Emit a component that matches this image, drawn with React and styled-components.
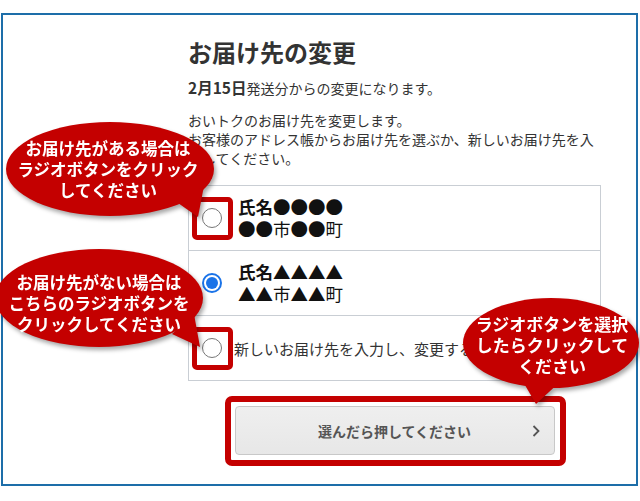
import React from "react";
import styled, { createGlobalStyle } from "styled-components";

const GlobalStyle = createGlobalStyle`
    body {
        margin: 0;
        background: #fff;
        font-family: "Noto Sans CJK JP", "Noto Sans", sans-serif;
        color: #333;
    }
`

const Page = styled.div`
    position: relative;
    width: 640px;
    height: 501px;
    overflow: hidden;
    padding-top: 13px;
    padding-left: 1px;
    box-sizing: border-box;
`

const Frame = styled.div`
    width: 637px;
    height: 473px;
    box-sizing: border-box;
    border: 2px solid #1d6ea9;
    padding: 21px 0 0 185px;
`

const Column = styled.div`
    width: 413px;
    display: flex;
    flex-direction: column;
`

const Title = styled.h1`
    margin: 0;
    font-size: 24px;
    line-height: 31px;
    font-weight: 700;
    color: #333;
`

const Lead = styled.p`
    margin: 10px 0 0;
    font-size: 14px;
    line-height: 20px;
    b {
        font-size: 15.5px;
        font-weight: 700;
    }
`

const Note = styled.p`
    margin: 13px 0 0;
    font-size: 14px;
    line-height: 19px;
`

const List = styled.div`
    margin-top: 17px;
    border: 1px solid #c9ced4;
`

const Row = styled.label`
    display: flex;
    align-items: center;
    height: 64px;
    padding-left: 13px;
    gap: ${p => p.$gap}px;
    & + & {
        border-top: 1px solid #c9ced4;
    }
`

const Radio = styled.span`
    position: relative;
    flex: none;
    width: 20px;
    height: 20px;
    box-sizing: border-box;
    border-radius: 50%;
    border: ${p => p.$checked ? "2px solid #1a73e8" : "1px solid #777"};
    background: #fff;
    &::before {
        content: "";
        display: ${p => p.$checked ? "block" : "none"};
        position: absolute;
        inset: 2px;
        border-radius: 50%;
        background: #1a73e8;
    }
    &::after {
        content: "";
        display: ${p => p.$marked ? "block" : "none"};
        position: absolute;
        left: -11px;
        top: -12px;
        width: 41px;
        height: 43px;
        box-sizing: border-box;
        border: 5px solid #c40000;
        border-radius: 5px;
    }
`

const Address = styled.div`
    display: flex;
    flex-direction: column;
    font-size: 17.5px;
    line-height: 22px;
    color: #111;
    strong {
        font-weight: 700;
    }
`

const NewText = styled.span`
    font-size: 15px;
    color: #333;
`

const ButtonWrap = styled.div`
    position: relative;
    margin: 25px auto 0;
    width: 320px;
    &::after {
        content: "";
        position: absolute;
        left: -10px;
        top: -10px;
        right: -11px;
        bottom: -11px;
        border: 6px solid #c40000;
        border-radius: 7px;
        pointer-events: none;
    }
`

const SubmitButton = styled.button`
    position: relative;
    width: 100%;
    height: 49px;
    border: 1px solid #c8c8c8;
    border-radius: 4px;
    background: linear-gradient(#efefef, #e7e7e7);
    font-family: inherit;
    font-size: 14px;
    font-weight: 700;
    color: #555;
    cursor: pointer;
    svg {
        position: absolute;
        right: 14px;
        top: 50%;
        transform: translateY(-50%);
    }
`

const Bubble = styled.div`
    position: absolute;
    left: ${p => p.$x}px;
    top: ${p => p.$y}px;
    width: ${p => p.$w}px;
    height: ${p => p.$h}px;
    filter: drop-shadow(2px 3px 2px rgba(0, 0, 0, 0.35));
    svg {
        position: absolute;
        inset: 0;
    }
`

const BubbleText = styled.div`
    position: absolute;
    left: ${p => p.$cx - 120}px;
    top: ${p => p.$cy}px;
    width: 240px;
    transform: translateY(-50%);
    text-align: center;
    color: #fff;
    font-size: ${p => p.$size}px;
    font-weight: 700;
    line-height: ${p => p.$lh}px;
`

function Callout({ x, y, w, h, ellipse, tail, text, size = 16.5, lh = 21, lines }) {
    const [cx, cy, rx, ry] = ellipse;
    const [tx, ty] = text || [cx, cy];
    return (
        <Bubble $x={x} $y={y} $w={w} $h={h}>
            <svg width={w} height={h} viewBox={`${x} ${y} ${w} ${h}`}>
                <ellipse cx={cx} cy={cy} rx={rx} ry={ry} fill="#c40000" />
                <polygon points={tail} fill="#c40000" />
            </svg>
            <BubbleText $cx={tx - x} $cy={ty - y} $size={size} $lh={lh}>
                {lines.map(l => <div key={l}>{l}</div>)}
            </BubbleText>
        </Bubble>
    );
}

export default function App() {
    return (
        <Page>
            <GlobalStyle />
            <Frame>
                <Column>
                    <Title>お届け先の変更</Title>
                    <Lead><b>2月15日</b>発送分からの変更になります。</Lead>
                    <Note>
                        おいトクのお届け先を変更します。<br />
                        お客様のアドレス帳からお届け先を選ぶか、新しいお届け先を入力してください。
                    </Note>
                    <List>
                        <Row $gap={16}>
                            <Radio $marked />
                            <Address>
                                <strong>氏名●●●●</strong>
                                <span>●●市●●町</span>
                            </Address>
                        </Row>
                        <Row $gap={16}>
                            <Radio $checked />
                            <Address>
                                <strong>氏名▲▲▲▲</strong>
                                <span>▲▲市▲▲町</span>
                            </Address>
                        </Row>
                        <Row $gap={12}>
                            <Radio $marked />
                            <NewText>新しいお届け先を入力し、変更する</NewText>
                        </Row>
                    </List>
                    <ButtonWrap>
                        <SubmitButton>
                            選んだら押してください
                            <svg width="8" height="13" viewBox="0 0 8 13">
                                <polyline points="1.5,1.5 6.5,6.5 1.5,11.5" fill="none" stroke="#555" strokeWidth="1.8" />
                            </svg>
                        </SubmitButton>
                    </ButtonWrap>
                </Column>
            </Frame>

            <Callout
                x={0} y={110} w={225} h={115}
                ellipse={[110, 169, 104, 47]}
                text={[108, 169]}
                tail="178,203 198,217 204,186"
                lines={["お届け先がある場合は", "ラジオボタンをクリック", "してください"]}
            />
            <Callout
                x={-10} y={240} w={225} h={115}
                ellipse={[99, 298, 104, 49]}
                text={[99, 303]}
                tail="172,334 200,347 194,314"
                lines={["お届け先がない場合は", "こちらのラジオボタンを", "クリックしてください"]}
            />
            <Callout
                x={455} y={290} w={190} h={120}
                ellipse={[551, 343, 88, 45]}
                text={[552, 344]}
                tail="522,380 536,404 562,380"
                size={17}
                lh={21}
                lines={["ラジオボタンを選択", "したらクリックして", "ください"]}
            />
        </Page>
    );
}
